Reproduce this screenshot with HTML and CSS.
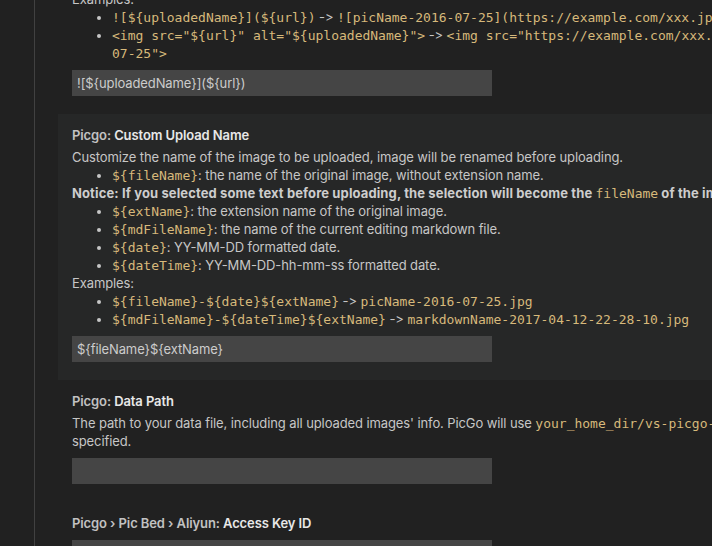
FILE: index.html
```html
<!DOCTYPE html>
<html>
<head>
<meta charset="utf-8">
<link rel="stylesheet" href="styles.css">
</head>
<body>
<div class="app">
  <div class="toc"></div>
  <div class="settings">
    <div class="scroll">
      <div class="item">
        <div class="desc">
          <div class="line">Examples:</div>
          <ul>
            <li><code>![${uploadedName}](${url})</code> -&gt; <code>![picName-2016-07-25](https://example.com/xxx.jpg)</code></li>
            <li><code>&lt;img src="${url}" alt="${uploadedName}"&gt;</code> -&gt; <code>&lt;img src="https://example.com/xxx.jpg" alt="picName-2016-<br>07-25"&gt;</code></li>
          </ul>
        </div>
        <div class="input">![${uploadedName}](${url})</div>
      </div>

      <div class="item focused">
        <div class="title"><span class="cat">Picgo: </span><span class="label">Custom Upload Name</span></div>
        <div class="desc">
          <div class="line">Customize the name of the image to be uploaded, image will be renamed before uploading.</div>
          <ul>
            <li><code>${fileName}</code>: the name of the original image, without extension name.</li>
          </ul>
          <div class="line"><strong>Notice: If you selected some text before uploading, the selection will become the <code>fileName</code> of the image to be uploaded.</strong></div>
          <ul>
            <li><code>${extName}</code>: the extension name of the original image.</li>
            <li><code>${mdFileName}</code>: the name of the current editing markdown file.</li>
            <li><code>${date}</code>: YY-MM-DD formatted date.</li>
            <li><code>${dateTime}</code>: YY-MM-DD-hh-mm-ss formatted date.</li>
          </ul>
          <div class="line">Examples:</div>
          <ul>
            <li><code>${fileName}-${date}${extName}</code> -&gt; <code>picName-2016-07-25.jpg</code></li>
            <li><code>${mdFileName}-${dateTime}${extName}</code> -&gt; <code>markdownName-2017-04-12-22-28-10.jpg</code></li>
          </ul>
        </div>
        <div class="input">${fileName}${extName}</div>
      </div>

      <div class="item">
        <div class="title"><span class="cat">Picgo: </span><span class="label">Data Path</span></div>
        <div class="desc">
          <div class="line">The path to your data file, including all uploaded images' info. PicGo will use <code>your_home_dir/vs-picgo-data.json</code> if not<br>specified.</div>
        </div>
        <div class="input"></div>
      </div>

      <div class="item">
        <div class="title"><span class="cat">Picgo › Pic Bed › Aliyun: </span><span class="label">Access Key ID</span></div>
        <div class="desc"></div>
        <div class="input"></div>
      </div>
    </div>
  </div>
</div>
</body>
</html>
```
FILE: styles.css
```css
html, body {
  margin: 0;
  padding: 0;
  background: #212121;
  overflow: hidden;
}
body {
  width: 712px;
  height: 546px;
  font-family: "Inter", "Liberation Sans", sans-serif;
  font-size: 13px;
  line-height: 18px;
  letter-spacing: -0.1px;
  font-feature-settings: "calt" 0, "liga" 0;
  color: #c6c6c6;
}
.app {
  display: flex;
  height: 546px;
  overflow: hidden;
}
.toc {
  flex: 0 0 34px;
  background: #212121;
  border-right: 1px solid #414141;
}
.settings {
  flex: 1 1 auto;
  min-width: 0;
  padding-left: 23px;
  overflow: hidden;
}
.scroll {
  width: 900px;
  margin-top: -10px;
}
.item {
  padding: 12px 14px 18px;
}
.item:first-child {
  padding-top: 0;
}
.focused {
  background: #262727;
}
.title {
  height: 18px;
  white-space: nowrap;
  font-weight: 600;
}
.cat {
  color: #c2c2c2;
}
.label {
  color: #e8e8e8;
}
.desc {
  margin-top: 4px;
  white-space: nowrap;
}
.item:first-child .desc {
  margin-top: 0;
}
.line {
  height: 18px;
  white-space: nowrap;
}
.desc > .line:only-child {
  height: auto;
}
strong {
  font-weight: 700;
  letter-spacing: 0.12px;
  color: #cdcdcd;
}
ul {
  margin: 0;
  padding-left: 40px;
}
li {
  white-space: nowrap;
}
code {
  font-family: "DejaVu Sans Mono", "Liberation Mono", monospace;
  font-size: 13px;
  line-height: 12px;
  letter-spacing: 0;
  font-weight: 400;
  color: #d7b97b;
}
.input {
  margin-top: 8px;
  width: 420px;
  height: 26px;
  box-sizing: border-box;
  background: #454545;
  color: #cccccc;
  padding: 4px 5px;
  white-space: nowrap;
}
```
